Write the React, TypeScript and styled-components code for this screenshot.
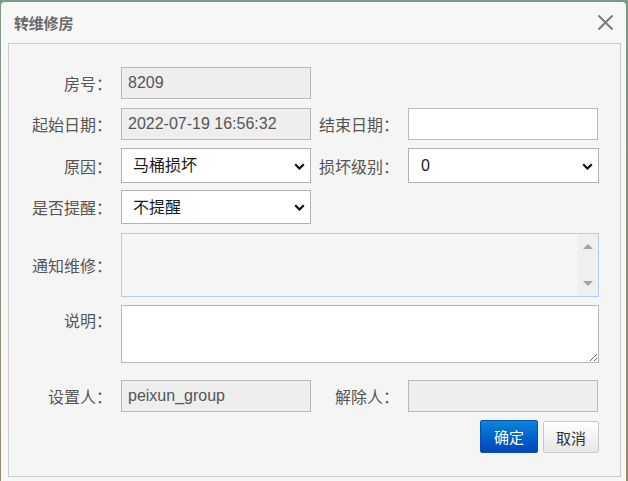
import React from "react";
import styled, { createGlobalStyle } from "styled-components";

const Global = createGlobalStyle`
  html, body { margin: 0; padding: 0; }
  body {
    width: 628px;
    height: 481px;
    overflow: hidden;
    background: linear-gradient(180deg, #7d9a82 0%, #8a8f7c 55%, #9a8a6c 100%);
    font-family: "Liberation Sans", "Noto Sans CJK SC", sans-serif;
  }
`;

const Dialog = styled.div`
  margin: 2px 2px 0 1px;
  height: 479px;
  background: #f7f7f7;
  border-radius: 4px 4px 0 0;
  padding: 0 5px 0 7px;
  box-sizing: border-box;
  display: flex;
  flex-direction: column;
`;

const Header = styled.div`
  height: 41px;
  display: flex;
  align-items: center;
  justify-content: space-between;
  padding: 0 7px 0 6px;
`;

const Title = styled.div`
  font-size: 15px;
  font-weight: bold;
  color: #6b6b6b;
  letter-spacing: -0.2px;
`;

const Close = styled.button`
  border: 0;
  background: transparent;
  padding: 0;
  width: 18px;
  height: 18px;
  display: flex;
  align-items: center;
  justify-content: center;
  cursor: pointer;
`;

const Panel = styled.div`
  flex: 1;
  border: 1px solid #cccccc;
  background: #f5f5f5;
  padding: 23px 21px 0 0;
  margin-bottom: 4px;
  display: flex;
  flex-direction: column;
`;

const Row = styled.div<{ $mt?: number; $top?: boolean }>`
  display: flex;
  align-items: ${(p) => (p.$top ? "flex-start" : "center")};
  margin-top: ${(p) => p.$mt ?? 0}px;
`;

const Label = styled.label<{ $w: number; $pt?: number }>`
  box-sizing: border-box;
  width: ${(p) => p.$w}px;
  flex: none;
  text-align: right;
  font-size: 16px;
  color: #555555;
  padding-right: 9px;
  padding-top: ${(p) => p.$pt ?? 0}px;
  white-space: nowrap;
`;

const Input = styled.input<{ $h?: number }>`
  width: 190px;
  height: ${(p) => p.$h ?? 32}px;
  box-sizing: border-box;
  border: 1px solid #b9b9b9;
  background: ${(p) => (p.readOnly ? "#eeeeee" : "#ffffff")};
  color: #555555;
  font-family: "Liberation Sans", "Noto Sans CJK SC", sans-serif;
  font-size: 16px;
  padding: 0 6px;
  margin: 0;
  outline: none;
  border-radius: 0;
`;

const SelectWrap = styled.div<{ $h: number; $w?: number }>`
  position: relative;
  width: ${(p) => p.$w ?? 190}px;
  height: ${(p) => p.$h}px;
  flex: none;
`;

const Select = styled.select<{ $pl: number }>`
  appearance: none;
  -webkit-appearance: none;
  width: 100%;
  height: 100%;
  box-sizing: border-box;
  border: 1px solid #b3b3b3;
  background: #ffffff;
  color: #1a1a1a;
  font-family: "Liberation Sans", "Noto Sans CJK SC", sans-serif;
  font-size: 16px;
  padding: 0 0 0 ${(p) => p.$pl}px;
  margin: 0;
  outline: none;
  border-radius: 0;
`;

const Chevron = styled.svg`
  position: absolute;
  right: 6px;
  top: 50%;
  margin-top: -3px;
  width: 11px;
  height: 7px;
  pointer-events: none;
`;

const ScrollBox = styled.div`
  width: 478px;
  height: 64px;
  box-sizing: border-box;
  border: 1px solid #a9d0f2;
  background: #f5f5f5;
  display: flex;
`;

const PlainArea = styled.textarea`
  flex: 1;
  border: 0;
  background: transparent;
  resize: none;
  outline: none;
  font-family: "Liberation Sans", "Noto Sans CJK SC", sans-serif;
  font-size: 16px;
  overflow: hidden;
`;

const ScrollTrack = styled.div`
  width: 20px;
  background: #efefef;
  display: flex;
  flex-direction: column;
  justify-content: space-between;
  align-items: center;
  padding: 10px 0 10px;
`;

const Arrow = styled.div<{ $down?: boolean }>`
  width: 0;
  height: 0;
  border-left: 5px solid transparent;
  border-right: 5px solid transparent;
  ${(p) =>
    p.$down
      ? "border-top: 5px solid #a3a3a3;"
      : "border-bottom: 5px solid #a3a3a3;"}
`;

const TextArea = styled.textarea`
  width: 478px;
  height: 58px;
  box-sizing: border-box;
  border: 1px solid #b9b9b9;
  background: #ffffff;
  resize: both;
  outline: none;
  font-family: "Liberation Sans", "Noto Sans CJK SC", sans-serif;
  font-size: 16px;
  padding: 4px 6px;
  margin: 0;
  display: block;
`;

const Actions = styled.div`
  display: flex;
  justify-content: flex-end;
  align-items: flex-start;
  gap: 5px;
  margin-top: 8px;
`;

const Button = styled.button<{ $primary?: boolean }>`
  height: ${(p) => (p.$primary ? 33 : 32)}px;
  width: ${(p) => (p.$primary ? 58 : 56)}px;
  margin-top: ${(p) => (p.$primary ? 0 : 1)}px;
  box-sizing: border-box;
  border-radius: 2px;
  font-family: "Liberation Sans", "Noto Sans CJK SC", sans-serif;
  font-size: 15px;
  padding: 0;
  cursor: pointer;
  border: 1px solid ${(p) => (p.$primary ? "#0350b0" : "#c9c9c9")};
  color: ${(p) => (p.$primary ? "#ffffff" : "#333333")};
  background: ${(p) =>
    p.$primary
      ? "linear-gradient(180deg, #0a86da 0%, #0363cc 50%, #0146bd 100%)"
      : "linear-gradient(180deg, #ffffff 0%, #f3f3f3 50%, #e6e6e6 100%)"};
`;

const ChevronIcon = () => (
  <Chevron viewBox="0 0 11 7">
    <path d="M1.2 1.2 L5.5 5.5 L9.8 1.2" fill="none" stroke="#111" strokeWidth="2.2" />
  </Chevron>
);

export default function App() {
  return (
    <>
      <Global />
      <Dialog>
        <Header>
          <Title>转维修房</Title>
          <Close aria-label="关闭">
            <svg width="17" height="17" viewBox="0 0 17 17">
              <path d="M1.5 1.5 L15.5 15.5 M15.5 1.5 L1.5 15.5" stroke="#7a7a7a" strokeWidth="2" />
            </svg>
          </Close>
        </Header>
        <Panel>
          <Row>
            <Label $w={112}>房号：</Label>
            <Input readOnly defaultValue="8209" />
          </Row>
          <Row $mt={9}>
            <Label $w={112}>起始日期：</Label>
            <Input readOnly defaultValue="2022-07-19 16:56:32" />
            <Label $w={97}>结束日期：</Label>
            <Input defaultValue="" />
          </Row>
          <Row $mt={8}>
            <Label $w={112}>原因：</Label>
            <SelectWrap $h={35}>
              <Select $pl={11} defaultValue="马桶损坏">
                <option>马桶损坏</option>
              </Select>
              <ChevronIcon />
            </SelectWrap>
            <Label $w={97}>损坏级别：</Label>
            <SelectWrap $h={35} $w={191}>
              <Select $pl={12} defaultValue="0">
                <option>0</option>
              </Select>
              <ChevronIcon />
            </SelectWrap>
          </Row>
          <Row $mt={7}>
            <Label $w={112}>是否提醒：</Label>
            <SelectWrap $h={34}>
              <Select $pl={11} defaultValue="不提醒">
                <option>不提醒</option>
              </Select>
              <ChevronIcon />
            </SelectWrap>
          </Row>
          <Row $mt={9}>
            <Label $w={112}>通知维修：</Label>
            <ScrollBox>
              <PlainArea readOnly />
              <ScrollTrack>
                <Arrow />
                <Arrow $down />
              </ScrollTrack>
            </ScrollBox>
          </Row>
          <Row $mt={8} $top>
            <Label $w={112} $pt={3}>说明：</Label>
            <TextArea />
          </Row>
          <Row $mt={17}>
            <Label $w={112}>设置人：</Label>
            <Input readOnly defaultValue="peixun_group" />
            <Label $w={97}>解除人：</Label>
            <Input readOnly defaultValue="" />
          </Row>
          <Actions>
            <Button $primary>确定</Button>
            <Button>取消</Button>
          </Actions>
        </Panel>
      </Dialog>
    </>
  );
}
